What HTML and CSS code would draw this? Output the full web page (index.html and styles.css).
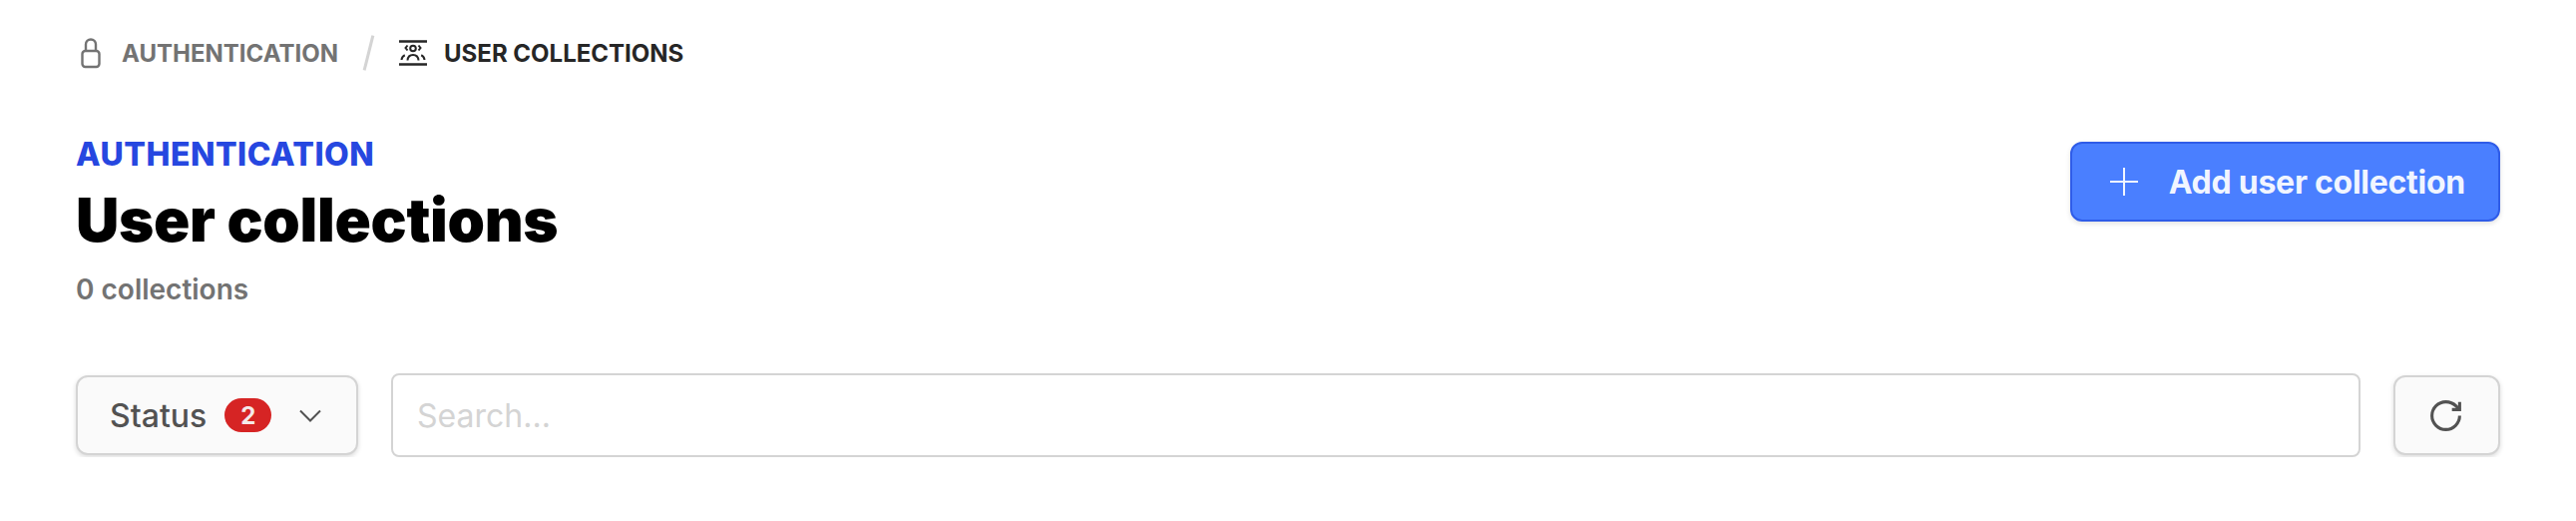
FILE: index.html
```html
<!DOCTYPE html>
<html lang="en">
<head>
    <meta charset="UTF-8">
    <title>User collections</title>
    <link rel="stylesheet" href="styles.css">
</head>
<body>
    <nav class="breadcrumb">
        <a class="crumb" href="#">
            <svg class="crumb-icon" viewBox="0 0 24 32" fill="none" stroke="currentColor" stroke-width="2.4">
                <rect x="3.5" y="14" width="17" height="16" rx="3"/>
                <path d="M7 14V7.5a5 5 0 0 1 10 0V14"/>
            </svg>
            <span>AUTHENTICATION</span>
        </a>
        <span class="crumb-sep"></span>
        <span class="crumb crumb-current">
            <svg class="crumb-icon-wide" viewBox="0 0 28 28" fill="none" stroke="currentColor" stroke-width="2">
                <path d="M0 2.500h28M0 25.500h28" stroke-width="2.400"/>
                <circle cx="14" cy="9.500" r="2.800"/>
                <path d="M8.500 6.500 6.500 9l2 2.500M19.500 6.500l2 2.500-2 2.500"/>
                <path d="M8.500 21.500c.3-3.600 2.400-5.500 5.500-5.500s5.200 1.900 5.500 5.500M2.500 21c.2-2.500 1.300-4 3.300-4.800M25.500 21c-.2-2.500-1.300-4-3.300-4.800"/>
            </svg>
            <span>USER COLLECTIONS</span>
        </span>
    </nav>

    <header class="page-head">
        <div class="page-title">
            <div class="eyebrow">AUTHENTICATION</div>
            <h1>User collections</h1>
            <div class="count">0 collections</div>
        </div>
        <button class="btn-primary" type="button">
            <svg class="btn-icon" viewBox="0 0 28 28" fill="none" stroke="currentColor" stroke-width="2">
                <path d="M14 0v28M0 14h28"/>
            </svg>
            <span>Add user collection</span>
        </button>
    </header>

    <div class="toolbar">
        <button class="btn-filter" type="button">
            <span>Status</span>
            <span class="badge">2</span>
            <svg class="chevron" viewBox="0 0 22 13" fill="none" stroke="currentColor" stroke-width="2">
                <path d="M1 1.500l10 10 10-10"/>
            </svg>
        </button>
        <input class="search" type="text" placeholder="Search...">
        <button class="btn-refresh" type="button" aria-label="Refresh">
            <svg class="refresh-icon" viewBox="0 0 24 24" fill="none" stroke="currentColor" stroke-width="2">
                <path d="M21 12a9 9 0 1 1-9-9c2.520 0 4.930 1 6.740 2.740L21 8"/>
                <path d="M21 3v5h-5"/>
            </svg>
        </button>
    </div>
</body>
</html>
```

FILE: styles.css
```css
body {
    margin: 0;
    padding: 36px 76px 0 76px;
    background-color: #FFFFFF;
    font-family: Inter, "Liberation Sans", sans-serif;
}
.breadcrumb {
    display: flex;
    align-items: center;
    height: 34px;
    font-size: 24px;
    font-weight: 700;
}
.crumb {
    display: flex;
    align-items: center;
    color: #737373;
    text-decoration: none;
}
.crumb-icon {
    width: 24px;
    height: 32px;
    margin: 0 19px 0 3px;
}
.crumb-icon-wide {
    width: 28px;
    height: 28px;
    margin-right: 17px;
}
.crumb-sep {
    width: 3px;
    height: 36px;
    margin: 0 29px 0 29px;
    background-color: #D4D4D4;
    transform: rotate(14deg);
}
.crumb-current {
    color: #262626;
}
.page-head {
    display: flex;
    justify-content: space-between;
    align-items: flex-start;
    margin-top: 65px;
}
.eyebrow {
    font-size: 32px;
    line-height: 40px;
    font-weight: 800;
    letter-spacing: 0.5px;
    color: #2647E0;
}
h1 {
    margin: 9px 0 0 0;
    font-size: 60px;
    line-height: 72px;
    font-weight: 900;
    letter-spacing: -0.3px;
    color: #000000;
}
.count {
    margin-top: 16px;
    font-size: 28px;
    line-height: 36px;
    font-weight: 600;
    color: #737373;
}
.btn-primary {
    display: flex;
    align-items: center;
    gap: 31px;
    box-sizing: border-box;
    height: 80px;
    margin-top: 7px;
    padding: 0 33px 0 38px;
    background-color: #4A7FFF;
    color: #F1F5FF;
    border: 2px solid #2F5CE8;
    border-radius: 12px;
    box-shadow: 0 2px 5px rgba(0, 0, 0, 0.12);
    font-family: inherit;
    font-size: 32px;
    font-weight: 700;
    letter-spacing: -0.26px;
}
.btn-icon {
    width: 28px;
    height: 28px;
}
.toolbar {
    display: flex;
    align-items: center;
    gap: 33px;
    margin-top: 66px;
}
.btn-filter, .btn-refresh {
    display: flex;
    align-items: center;
    box-sizing: border-box;
    height: 80px;
    background-color: #FAFAFA;
    color: #525252;
    border: 2px solid #D4D4D4;
    border-radius: 12px;
    box-shadow: 0 2px 5px rgba(0, 0, 0, 0.14);
    font-family: inherit;
}
.btn-filter {
    width: 283px;
    padding: 0 32px;
    font-size: 32px;
    font-weight: 500;
}
.badge {
    display: flex;
    justify-content: center;
    align-items: center;
    width: 47px;
    height: 34px;
    margin: 0 28px 0 18px;
    background-color: #D62424;
    color: #F5E9E9;
    border-radius: 17px;
    font-size: 24px;
    font-weight: 700;
}
.chevron {
    width: 22px;
    height: 13px;
}
.search {
    flex: 1;
    box-sizing: border-box;
    height: 84px;
    padding: 0 24px;
    background-color: #FFFFFF;
    border: 2px solid #D4D4D4;
    border-radius: 8px;
    font-family: inherit;
    font-size: 32px;
}
.search::placeholder {
    color: #D4D4D4;
}
.btn-refresh {
    justify-content: center;
    width: 107px;
}
.refresh-icon {
    width: 37px;
    height: 37px;
    margin-right: 2px;
}
```
